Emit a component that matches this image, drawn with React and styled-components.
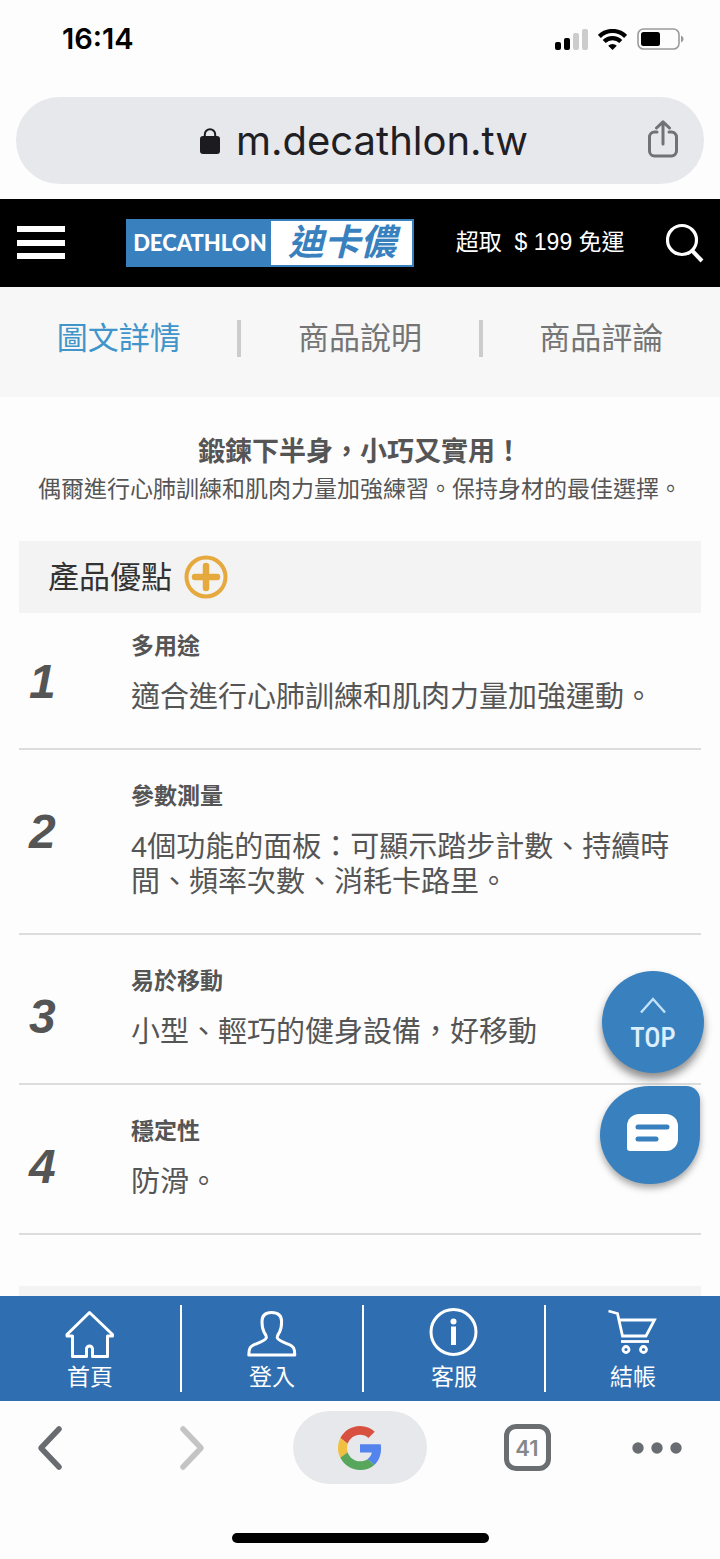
import React from 'react';
import styled, { createGlobalStyle } from 'styled-components';

const GlobalStyle = createGlobalStyle`
  * {
    box-sizing: border-box;
  }

  body {
    margin: 0;
    background: #fdfdfd;
    color: #555;
    font-family: "Liberation Sans", "Noto Sans CJK TC", sans-serif;
  }

  h2, h3, p, ol {
    margin: 0;
    padding: 0;
  }

  button {
    padding: 0;
    border: 0;
    background: none;
    color: inherit;
    font-family: inherit;
    cursor: pointer;
  }

  a {
    color: inherit;
    text-decoration: none;
  }

  svg {
    display: block;
    flex: none;
  }
`;

const features = [
  { title: '多用途', text: '適合進行心肺訓練和肌肉力量加強運動。' },
  { title: '參數測量', text: '4個功能的面板：可顯示踏步計數、持續時間、頻率次數、消耗卡路里。' },
  { title: '易於移動', text: '小型、輕巧的健身設備，好移動' },
  { title: '穩定性', text: '防滑。' },
];

const tabs = ['圖文詳情', '商品說明', '商品評論'];

const SignalIcon = () => (
  <svg width="33" height="21" viewBox="0 0 33 21">
    <rect x="0" y="13" width="6" height="8" rx="2" fill="#000" />
    <rect x="9" y="9" width="6" height="12" rx="2" fill="#000" />
    <rect x="18" y="4" width="6" height="17" rx="2" fill="#ccc" />
    <rect x="27" y="0" width="6" height="21" rx="2" fill="#ccc" />
  </svg>
);

const WifiIcon = () => (
  <svg width="29" height="21" viewBox="0 0 29 21" fill="none" stroke="#000" strokeWidth="4.2">
    <path d="M1.4 7.4a18.5 18.5 0 0 1 26.2 0" />
    <path d="M6.2 12.5a11.8 11.8 0 0 1 16.6 0" />
    <path d="M10.2 16.7a6.2 6.2 0 0 1 8.6 0L14.500 21z" fill="#000" stroke="none" />
  </svg>
);

const BatteryIcon = () => (
  <svg width="47" height="22" viewBox="0 0 47 22">
    <rect x="1" y="1" width="41" height="20" rx="5.5" fill="none" stroke="#9b9b9b" strokeWidth="1.6" />
    <rect x="4" y="4" width="19" height="14" rx="2.5" fill="#000" />
    <path d="M44 7.5c3.4 1.4 3.4 5.6 0 7z" fill="#9b9b9b" />
  </svg>
);

const LockIcon = () => (
  <svg width="20" height="26" viewBox="0 0 20 26">
    <path d="M4.8 10V6.4a5.2 5.2 0 0 1 10.4 0V10" fill="none" stroke="#1c1c20" strokeWidth="2" />
    <rect x="0" y="8" width="20" height="18" rx="3" fill="#1c1c20" />
  </svg>
);

const ShareIcon = () => (
  <svg width="30" height="38" viewBox="0 0 30 38" fill="none" stroke="#707275" strokeWidth="3" strokeLinecap="round" strokeLinejoin="round">
    <path d="M9 12H6.500a5 5 0 0 0-5 5v14a5 5 0 0 0 5 5h17a5 5 0 0 0 5-5V17a5 5 0 0 0-5-5H21" />
    <path d="M15 24V2M8.500 8 15 1.800 21.500 8" />
  </svg>
);

const MenuIcon = () => (
  <svg width="48" height="34" viewBox="0 0 48 34" fill="#fff">
    <path d="M0 0h48v6H0zM0 14h48v6H0zM0 27h48v6H0z" />
  </svg>
);

const SearchIcon = () => (
  <svg width="38" height="40" viewBox="0 0 38 40" fill="none" stroke="#fff" strokeWidth="3.2">
    <circle cx="16" cy="17" r="14.500" />
    <path d="M26 27.500 36 38" strokeWidth="4" />
  </svg>
);

const PlusIcon = () => (
  <svg width="44" height="44" viewBox="0 0 44 44" fill="none" stroke="#e5a93d">
    <circle cx="22" cy="22" r="19.500" strokeWidth="4" />
    <path d="M22 11v22M11 22h22" strokeWidth="6.500" strokeLinecap="round" />
  </svg>
);

const ArrowUpIcon = () => (
  <svg width="28" height="18" viewBox="0 0 28 18" fill="none" stroke="#c3e2fa" strokeWidth="2.400">
    <path d="M2 16.500 14 3l12 13.500" />
  </svg>
);

const ChatIcon = () => (
  <svg width="51" height="38" viewBox="0 0 51 38">
    <path d="M12 0h27a12 12 0 0 1 12 12v13a12 12 0 0 1-12 12H3a3 3 0 0 1-3-3V12A12 12 0 0 1 12 0z" fill="#fff" />
    <path d="M11 13h29M11 25h18" stroke="#3981be" strokeWidth="5" strokeLinecap="round" />
  </svg>
);

const HomeIcon = () => (
  <svg width="50" height="50" viewBox="0 0 50 50" fill="none" stroke="#fff" strokeWidth="3" strokeLinejoin="round">
    <path d="M24.500 4.500 2 26.500V28h5.500v20.500h14V41a3 3 0 0 1 6 0v7.500h15V28h5v-1.500z" />
  </svg>
);

const UserIcon = () => (
  <svg width="50" height="50" viewBox="0 0 50 50" fill="none" stroke="#fff" strokeWidth="3" strokeLinejoin="round">
    <path d="M24.500 4.500c-6.500 0-9.500 3-9.500 9 0 4 .2 7 2 10.500 1.500 2.800 3 4.200 2.200 6-1 2.500-6 4.200-11 6.200-5 2-6.400 4-6.400 10.800h46c0-6.800-1.400-8.800-6.400-10.800-5-2-10-3.700-11-6.200-.8-1.800.7-3.200 2.200-6 1.800-3.500 2-6.500 2-10.500 0-6-3.100-9-10.100-9z" />
  </svg>
);

const InfoIcon = () => (
  <svg width="50" height="50" viewBox="0 0 50 50">
    <circle cx="24.500" cy="24" r="22.500" fill="none" stroke="#fff" strokeWidth="3" />
    <circle cx="24.500" cy="13.500" r="3" fill="#fff" />
    <path d="M22 18.500h5V37h-5z" fill="#fff" />
  </svg>
);

const CartIcon = () => (
  <svg width="50" height="50" viewBox="0 0 50 50" fill="none" stroke="#fff" strokeWidth="2.800">
    <path d="M.5 3l9 2.500L14.500 28H38l8.500-16H11" />
    <path d="M13 33.500h28" />
    <circle cx="18" cy="41.500" r="3" />
    <circle cx="35.500" cy="41.500" r="3" />
  </svg>
);

const ChevronIcon = ({ forward }) => (
  <svg width="26" height="46" viewBox="0 0 26 46" fill="none" stroke={forward ? '#c4c4c4' : '#686c70'} strokeWidth="5.500" strokeLinecap="round" strokeLinejoin="round">
    <path d={forward ? 'M4 4l18 19L4 42' : 'M22 4 4 23l18 19'} />
  </svg>
);

const GoogleIcon = () => (
  <svg width="44" height="44" viewBox="0 0 48 48">
    <path fill="#d85140" d="M24 9.500c3.540 0 6.710 1.220 9.210 3.600l6.850-6.850C35.900 2.380 30.470 0 24 0 14.620 0 6.510 5.380 2.560 13.220l7.980 6.190C12.430 13.720 17.740 9.500 24 9.500z" />
    <path fill="#5383ec" d="M46.980 24.550c0-1.570-.15-3.090-.38-4.550H24v9.020h12.940c-.58 2.960-2.260 5.480-4.780 7.180l7.730 6c4.510-4.180 7.090-10.360 7.090-17.650z" />
    <path fill="#f1bf42" d="M10.530 28.590c-.48-1.450-.76-2.990-.76-4.590s.27-3.140.76-4.590l-7.980-6.190C.92 16.460 0 20.120 0 24s.92 7.540 2.560 10.780l7.970-6.190z" />
    <path fill="#58a55c" d="M24 48c6.480 0 11.930-2.130 15.890-5.810l-7.730-6c-2.150 1.450-4.920 2.300-8.160 2.300-6.260 0-11.570-4.220-13.470-9.910l-7.980 6.190C6.510 42.620 14.620 48 24 48z" />
  </svg>
);

const MoreIcon = () => (
  <svg width="50" height="12" viewBox="0 0 50 12" fill="#696c70">
    <circle cx="6" cy="6" r="5.700" />
    <circle cx="25" cy="6" r="5.700" />
    <circle cx="44" cy="6" r="5.700" />
  </svg>
);

const navItems = [
  { label: '首頁', Icon: HomeIcon },
  { label: '登入', Icon: UserIcon },
  { label: '客服', Icon: InfoIcon },
  { label: '結帳', Icon: CartIcon },
];

const App = () => (
  <Page>
    <GlobalStyle />
    <StatusBar>
      <Clock>16:14</Clock>
      <StatusIcons>
        <SignalIcon />
        <WifiIcon />
        <BatteryIcon />
      </StatusIcons>
    </StatusBar>

    <AddressBar>
      <Address type="button">
        <LockIcon />
        m.decathlon.tw
      </Address>
      <ShareButton type="button" aria-label="分享">
        <ShareIcon />
      </ShareButton>
    </AddressBar>

    <Header>
      <IconButton type="button" aria-label="選單">
        <MenuIcon />
      </IconButton>
      <Logo href="#home">
        <LogoLatin>DECATHLON</LogoLatin>
        <LogoChinese>迪卡儂</LogoChinese>
      </Logo>
      <Shipping>超取&nbsp; $ 199 免運</Shipping>
      <IconButton type="button" aria-label="搜尋">
        <SearchIcon />
      </IconButton>
    </Header>

    <Tabs>
      {tabs.map((tab, i) => (
        <React.Fragment key={tab}>
          {i > 0 && <Divider />}
          <Tab href={`#tab-${i}`} $active={i === 0}>{tab}</Tab>
        </React.Fragment>
      ))}
    </Tabs>

    <Content>
      <Intro>
        <IntroTitle>鍛鍊下半身，小巧又實用！</IntroTitle>
        <IntroText>偶爾進行心肺訓練和肌肉力量加強練習。保持身材的最佳選擇。</IntroText>
      </Intro>

      <SectionHeader>
        <SectionTitle>產品優點</SectionTitle>
        <PlusIcon />
      </SectionHeader>

      <FeatureList>
        {features.map((feature, i) => (
          <Feature key={feature.title}>
            <FeatureNumber>{i + 1}</FeatureNumber>
            <div>
              <FeatureTitle>{feature.title}</FeatureTitle>
              <FeatureText>{feature.text}</FeatureText>
            </div>
          </Feature>
        ))}
      </FeatureList>
      <NextSection />

      <Floating>
        <TopButton type="button">
          <ArrowUpIcon />
          TOP
        </TopButton>
        <ChatButton type="button" aria-label="線上客服">
          <ChatIcon />
        </ChatButton>
      </Floating>
    </Content>

    <BottomNav>
      {navItems.map(({ label, Icon }) => (
        <NavLink key={label} href={`#${label}`}>
          <Icon />
          <NavLabel>{label}</NavLabel>
        </NavLink>
      ))}
    </BottomNav>

    <BrowserBar>
      <Toolbar>
        <IconButton type="button" aria-label="上一頁">
          <ChevronIcon />
        </IconButton>
        <IconButton type="button" aria-label="下一頁">
          <ChevronIcon forward />
        </IconButton>
        <GoogleButton type="button" aria-label="Google">
          <GoogleIcon />
        </GoogleButton>
        <TabCount type="button">41</TabCount>
        <IconButton type="button" aria-label="更多">
          <MoreIcon />
        </IconButton>
      </Toolbar>
      <HomeIndicator />
    </BrowserBar>
  </Page>
);

const Page = styled.div`
  display: flex;
  flex-direction: column;
  min-height: 100vh;
`;

const StatusBar = styled.div`
  display: flex;
  justify-content: space-between;
  align-items: center;
  padding: 20px 36px 39px 62px;
`;

const Clock = styled.span`
  color: #000;
  font-family: Inter, sans-serif;
  font-size: 29px;
  font-weight: 600;
  line-height: 38px;
`;

const StatusIcons = styled.div`
  display: flex;
  align-items: center;
  gap: 10px;
`;

const AddressBar = styled.div`
  display: flex;
  align-items: center;
  height: 87px;
  margin: 0 16px 15px;
  padding: 0 26px 0 64px;
  border-radius: 44px;
  background: #e7e8ec;
`;

const Address = styled.button`
  flex: 1;
  display: flex;
  align-items: center;
  justify-content: center;
  gap: 16px;
  color: #202024;
  font-family: Inter, sans-serif;
  font-size: 40px;
  line-height: 48px;
`;

const ShareButton = styled.button`
  width: 30px;
  padding-bottom: 4px;
`;

const Header = styled.header`
  display: flex;
  align-items: center;
  justify-content: space-between;
  height: 88px;
  padding: 0 16px 0 17px;
  background: #000;
`;

const IconButton = styled.button`
  display: flex;
  justify-content: center;
  align-items: center;
`;

const Logo = styled.a`
  display: flex;
  width: 288px;
  height: 48px;
  margin-left: 20px;
  padding: 2px;
  background: #3981be;
`;

const LogoLatin = styled.span`
  flex: 1;
  color: #fff;
  font-family: Lato, sans-serif;
  font-size: 22px;
  font-weight: 900;
  line-height: 44px;
  text-align: center;
`;

const LogoChinese = styled.span`
  width: 141px;
  background: #fff;
  color: #3981be;
  font-size: 36px;
  font-style: italic;
  font-weight: 700;
  line-height: 44px;
  text-align: center;
`;

const Shipping = styled.span`
  color: #fff;
  font-size: 23px;
  line-height: 30px;
  padding-bottom: 2px;
  white-space: nowrap;
`;

const Tabs = styled.nav`
  display: flex;
  padding: 33px 0 40px;
  background: #f7f7f7;
`;

const Tab = styled.a`
  flex: 1;
  color: ${(props) => (props.$active ? '#4095ca' : '#757575')};
  font-size: 31px;
  line-height: 37px;
  text-align: center;
`;

const Divider = styled.span`
  width: 4px;
  background: #ccc;
`;

const Content = styled.main`
  position: relative;
  flex: 1;
  display: flex;
  flex-direction: column;
  padding: 0 19px;
`;

const Intro = styled.section`
  padding: 36px 0 34px;
  text-align: center;
`;

const IntroTitle = styled.h2`
  font-size: 27px;
  line-height: 38px;
`;

const IntroText = styled.p`
  font-size: 23px;
  line-height: 36px;
`;

const SectionHeader = styled.div`
  display: flex;
  align-items: center;
  gap: 12px;
  height: 72px;
  padding: 0 29px;
  background: #f3f3f3;
`;

const SectionTitle = styled.h2`
  color: #333;
  font-size: 31px;
  font-weight: 400;
  line-height: 37px;
`;

const FeatureList = styled.ol`
  list-style: none;
`;

const Feature = styled.li`
  display: grid;
  grid-template-columns: 102px 1fr;
  padding: 30px 20px 33px 10px;
  border-bottom: 2px solid #ddd;

  &:first-child {
    padding-top: 17px;
  }
`;

const FeatureNumber = styled.span`
  padding-top: 24px;
  font-size: 48px;
  font-style: italic;
  font-weight: 700;
  line-height: 56px;
`;

const FeatureTitle = styled.h3`
  margin-bottom: 18px;
  font-size: 23px;
  line-height: 32px;
`;

const FeatureText = styled.p`
  font-size: 29px;
  line-height: 35px;
`;

const NextSection = styled.div`
  flex: 1;
  min-height: 10px;
  margin-top: 51px;
  background: #f3f3f3;
`;

const Floating = styled.div`
  position: absolute;
  right: 16px;
  bottom: 112px;
  display: flex;
  flex-direction: column;
  align-items: flex-end;
  gap: 13px;
`;

const TopButton = styled.button`
  display: flex;
  flex-direction: column;
  align-items: center;
  gap: 8px;
  width: 102px;
  height: 102px;
  padding-top: 25px;
  border-radius: 50%;
  background: #3981be;
  box-shadow: 0 6px 9px rgba(0, 0, 0, 0.45);
  color: #dcefff;
  font-family: "Liberation Sans Narrow", "Roboto Condensed", Roboto, sans-serif;
  font-size: 27px;
  font-weight: 500;
  line-height: 32px;
`;

const ChatButton = styled.button`
  display: flex;
  align-items: center;
  justify-content: center;
  width: 100px;
  height: 98px;
  margin-right: 4px;
  padding: 0 0 4px 4px;
  border-radius: 50px 14px 50px 50px;
  background: #3981be;
  box-shadow: 0 4px 7px rgba(0, 0, 0, 0.35);
`;

const BottomNav = styled.nav`
  display: grid;
  grid-template-columns: repeat(3, 1fr) 174px;
  padding: 9px 0;
  background: #2f6eb1;
`;

const NavLink = styled.a`
  display: flex;
  flex-direction: column;
  align-items: center;
  gap: 4px;
  padding-top: 3px;
  border-right: 2px solid #fff;
  color: #fff;

  &:last-child {
    border-right: 0;
  }
`;

const NavLabel = styled.span`
  font-size: 23px;
  line-height: 30px;
`;

const BrowserBar = styled.footer`
  padding: 10px 0 16px;
`;

const Toolbar = styled.div`
  display: grid;
  grid-template-columns: 100fr 184fr 152fr 182fr 78fr;
  align-items: center;
  justify-items: center;
  padding-right: 24px;
`;

const GoogleButton = styled.button`
  display: flex;
  align-items: center;
  justify-content: center;
  width: 134px;
  height: 73px;
  border-radius: 37px;
  background: #e7e8ec;
`;

const TabCount = styled.button`
  width: 47px;
  height: 47px;
  border: 5px solid #6a6e71;
  border-radius: 12px;
  color: #85888b;
  font-family: Inter, sans-serif;
  font-size: 22px;
  font-weight: 600;
  line-height: 36px;
`;

const HomeIndicator = styled.div`
  width: 257px;
  height: 10px;
  margin: 49px auto 0;
  border-radius: 5px;
  background: #000;
`;

export default App;
